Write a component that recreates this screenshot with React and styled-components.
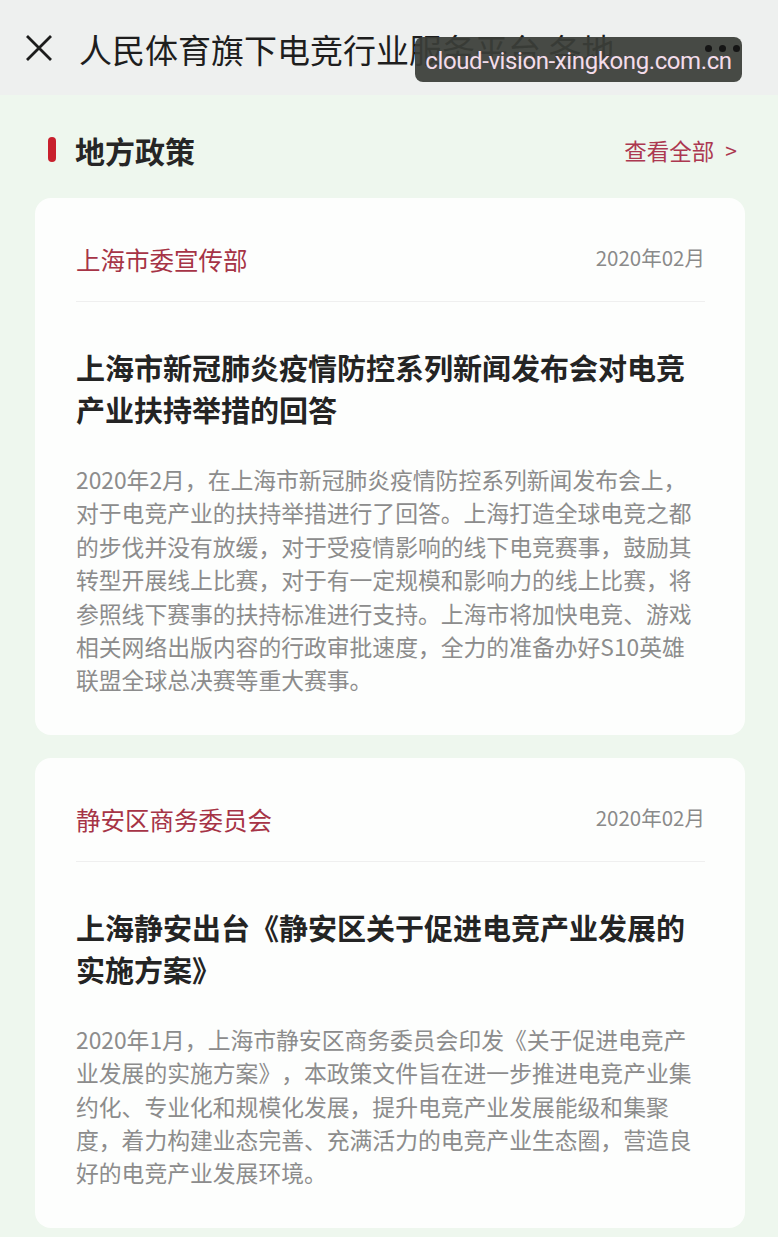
import React from "react";
import styled, { createGlobalStyle } from "styled-components";

const policies = [
  {
    id: 1,
    source: "上海市委宣传部",
    date: "2020年02月",
    title: "上海市新冠肺炎疫情防控系列新闻发布会对电竞产业扶持举措的回答",
    summary:
      "2020年2月，在上海市新冠肺炎疫情防控系列新闻发布会上，对于电竞产业的扶持举措进行了回答。上海打造全球电竞之都的步伐并没有放缓，对于受疫情影响的线下电竞赛事，鼓励其转型开展线上比赛，对于有一定规模和影响力的线上比赛，将参照线下赛事的扶持标准进行支持。上海市将加快电竞、游戏相关网络出版内容的行政审批速度，全力的准备办好S10英雄联盟全球总决赛等重大赛事。",
  },
  {
    id: 2,
    source: "静安区商务委员会",
    date: "2020年02月",
    title: "上海静安出台《静安区关于促进电竞产业发展的实施方案》",
    summary:
      "2020年1月，上海市静安区商务委员会印发《关于促进电竞产业发展的实施方案》，本政策文件旨在进一步推进电竞产业集约化、专业化和规模化发展，提升电竞产业发展能级和集聚度，着力构建业态完善、充满活力的电竞产业生态圈，营造良好的电竞产业发展环境。",
  },
];

const App = () => {
  return (
    <Page>
      <GlobalStyle />
      <TopBar>
        <CloseIcon viewBox="0 0 28 28">
          <path d="M2 2 L26 26 M26 2 L2 26" />
        </CloseIcon>
        <PageTitle>人民体育旗下电竞行业服务平台 各地</PageTitle>
        <Watermark>cloud-vision-xingkong.com.cn</Watermark>
        <MoreDots>
          <span />
          <span />
          <span />
        </MoreDots>
      </TopBar>
      <Content>
        <SectionHeader>
          <SectionMark />
          <SectionTitle>地方政策</SectionTitle>
          <ViewAll>
            查看全部<Chevron>&gt;</Chevron>
          </ViewAll>
        </SectionHeader>
        <CardList>
          {policies.map((item) => (
            <Card key={item.id}>
              <Meta>
                <Source>{item.source}</Source>
                <DateText>{item.date}</DateText>
              </Meta>
              <CardTitle>{item.title}</CardTitle>
              <Summary>{item.summary}</Summary>
            </Card>
          ))}
        </CardList>
      </Content>
    </Page>
  );
};

const GlobalStyle = createGlobalStyle`
  html, body {
    margin: 0;
    padding: 0;
    background: #eef7ee;
  }
  body {
    font-family: "Noto Sans CJK SC", "Noto Sans", sans-serif;
    text-spacing-trim: space-all;
  }
`;

const Page = styled.div`
  width: 778px;
  min-height: 1237px;
  background: #eef7ee;
  overflow: hidden;
`;

const TopBar = styled.div`
  position: relative;
  height: 95px;
  background: #eef0ef;
  display: flex;
  align-items: center;
  padding: 0 0 0 25px;
  box-sizing: border-box;
`;

const CloseIcon = styled.svg`
  width: 28px;
  height: 28px;
  flex-shrink: 0;

  path {
    stroke: #1c1c1c;
    stroke-width: 2.8;
    fill: none;
  }
`;

const PageTitle = styled.div`
  margin-left: 26px;
  font-size: 33px;
  color: #1e1e1e;
  white-space: nowrap;
  line-height: 40px;
  margin-top: 2px;
`;

const Watermark = styled.div`
  position: absolute;
  left: 415px;
  top: 37px;
  width: 327px;
  height: 45px;
  border-radius: 8px;
  background: rgba(58, 61, 56, 0.93);
  color: #f3dcea;
  font-family: "Roboto", sans-serif;
  font-size: 24px;
  display: flex;
  align-items: center;
  justify-content: center;
  letter-spacing: -0.4px;
  padding-top: 2px;
  box-sizing: border-box;
`;

const MoreDots = styled.div`
  position: absolute;
  right: 38px;
  top: 45px;
  display: flex;
  gap: 7px;

  span {
    width: 7px;
    height: 7px;
    border-radius: 50%;
    background: #151515;
  }
`;

const Content = styled.div`
  padding: 0 33px 40px 35px;
`;

const SectionHeader = styled.div`
  display: flex;
  align-items: center;
  height: 103px;
  padding: 6px 8px 0 13px;
  box-sizing: border-box;
`;

const SectionMark = styled.div`
  width: 8px;
  height: 25px;
  border-radius: 4px;
  background: #c8202d;
`;

const SectionTitle = styled.h2`
  margin: 0 0 0 19px;
  font-size: 30px;
  font-weight: 700;
  color: #262626;
  line-height: 40px;
`;

const ViewAll = styled.div`
  margin-left: auto;
  display: flex;
  align-items: center;
  font-size: 22.5px;
  color: #ac3850;
  line-height: 30px;
`;

const Chevron = styled.span`
  margin-left: 11px;
  font-size: 21px;
`;

const CardList = styled.div`
  display: flex;
  flex-direction: column;
  gap: 23px;
`;

const Card = styled.div`
  background: #fdfefd;
  border-radius: 16px;
  padding: 45px 40px 38px 41px;
`;

const Meta = styled.div`
  display: flex;
  justify-content: space-between;
  align-items: center;
  padding-bottom: 24px;
  border-bottom: 1px solid #efefef;
`;

const Source = styled.div`
  font-size: 24.5px;
  line-height: 34px;
  color: #a63446;
`;

const DateText = styled.div`
  font-size: 20.5px;
  line-height: 30px;
  color: #8a8a8a;
  margin-top: -6px;
`;

const CardTitle = styled.h3`
  margin: 44px 0 0;
  font-size: 29px;
  font-weight: 700;
  line-height: 42px;
  color: #242424;
`;

const Summary = styled.p`
  margin: 33px 0 0;
  font-size: 22.8px;
  line-height: 33.4px;
  color: #8c8c8c;
`;

export default App;
